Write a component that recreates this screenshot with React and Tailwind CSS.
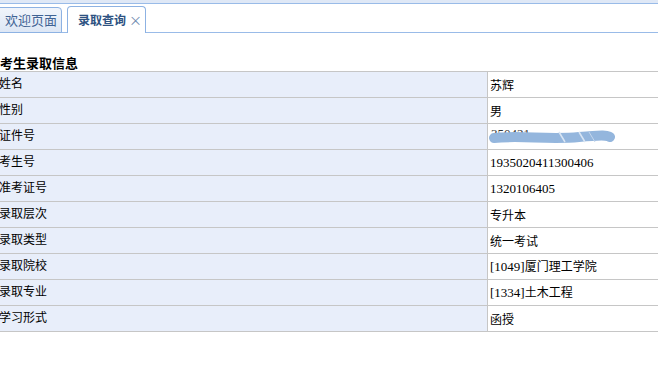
import React from "react";

const rows = [
  ["姓名", "苏辉"],
  ["性别", "男"],
  ["证件号", null],
  ["考生号", "1935020411300406"],
  ["准考证号", "1320106405"],
  ["录取层次", "专升本"],
  ["录取类型", "统一考试"],
  ["录取院校", "[1049]厦门理工学院"],
  ["录取专业", "[1334]土木工程"],
  ["学习形式", "函授"],
];

function Value({ v }) {
  if (v === null) {
    return (
      <div className="relative h-full w-full">
        <span className="absolute left-[1px] top-[3px] text-[13px] text-[#333] [font-family:'Liberation_Serif',serif] leading-[13px]">
          350421
        </span>
        <svg className="absolute left-[-1px] top-[6px]" width="126" height="14" viewBox="0 0 126 14">
          <path d="M5 8 C30 5, 60 10, 90 7 S 118 6, 121 7" stroke="#94b6dd" strokeWidth="10" strokeLinecap="round" fill="none" />
          <path d="M70 2 L76 12" stroke="#d9e5f3" strokeWidth="1.5" />
          <path d="M90 2 L96 12" stroke="#d9e5f3" strokeWidth="1.5" />
          <path d="M100 2 L106 12" stroke="#c4d6ec" strokeWidth="1" />
        </svg>
      </div>
    );
  }
  const parts = v.split(/(\[?\d+\]?)/).filter(Boolean);
  return (
    <span className="whitespace-nowrap">
      {parts.map((p, i) =>
        /\d/.test(p) ? (
          <span key={i} className="text-[13px] [font-family:'Liberation_Serif','Noto_Sans_CJK_SC',serif]">{p}</span>
        ) : (
          <span key={i} className="text-[12px] [font-family:'Noto_Sans_CJK_SC',sans-serif]">{p}</span>
        )
      )}
    </span>
  );
}

export default function App() {
  return (
    <div className="w-[658px] h-[369px] bg-white overflow-hidden [font-family:'Noto_Sans_CJK_SC',sans-serif] text-black">
      {/* tab header */}
      <div className="h-[3px] bg-[#dfe8f6]" />
      <div className="h-[30px] border-t border-b border-[#99bbe8] flex items-end bg-white">
        <div className="ml-[-4px] h-[26px] mb-[-1px] w-[66px] rounded-t-[4px] border border-[#8db2e3] bg-gradient-to-b from-[#f1f5fb] to-[#dde7f5] flex items-center justify-center text-[13px] text-[#3f6394] pl-[4px]">
          欢迎页面
        </div>
        <div className="ml-[5px] h-[27px] mb-[-1px] w-[79px] rounded-t-[4px] border border-b-0 border-[#8db2e3] bg-white flex items-center pl-[10px] text-[12px] font-bold text-[#2e5282]">
          录取查询
          <span className="ml-[3px] font-normal text-[13px] text-[#6d88ae]">×</span>
        </div>
      </div>
      {/* title */}
      <div className="mt-[21px] h-[17px] text-[13px] font-bold leading-[17px] pl-0">考生录取信息</div>
      {/* table */}
      <div className="border-t border-[#c6c6c6]">
        {rows.map(([k, v]) => (
          <div key={k} className="flex h-[26px] border-b border-[#c6c6c6]">
            <div className="w-[489px] bg-[#e8eefa] border-r border-[#c6c6c6] flex items-center text-[12px] pb-[3px] ml-[-1px]">
              {k}
            </div>
            <div className="flex-1 flex items-center pl-[2px] pb-[4px]">
              <Value v={v} />
            </div>
          </div>
        ))}
      </div>
    </div>
  );
}
